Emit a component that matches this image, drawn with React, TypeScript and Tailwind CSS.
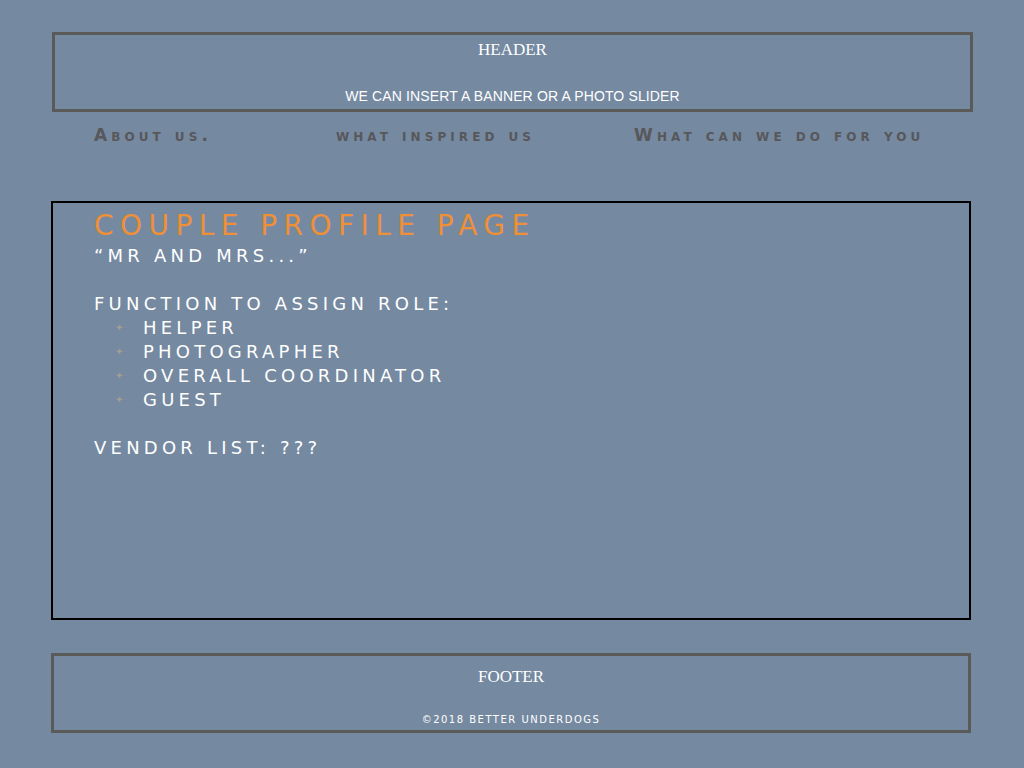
const roles = ["HELPER", "PHOTOGRAPHER", "OVERALL COORDINATOR", "GUEST"];

const wide = { fontFamily: '"DejaVu Sans", "Liberation Sans", sans-serif' };

export default function App() {
  return (
    <div className="min-h-[768px] w-full bg-[#7589a1] pt-[32px]">
      {/* header */}
      <header className="ml-[52px] flex h-[80px] w-[921px] flex-col items-center border-[3px] border-[#5a5a58] text-white">
        <p className="mt-[3px] text-[17px] leading-[24px]" style={{ fontFamily: '"Liberation Serif", serif' }}>
          HEADER
        </p>
        <p className="mt-auto mb-[3px] text-[14px] leading-[20px] tracking-[0.01em]" style={{ fontFamily: '"Liberation Sans", sans-serif' }}>
          WE CAN INSERT A BANNER OR A PHOTO SLIDER
        </p>
      </header>

      {/* nav */}
      <nav className="ml-[94px] mt-[12px] flex h-[24px] items-center text-[17px] font-bold text-[#58575a] [font-variant:small-caps] tracking-[0.24em]" style={wide}>
        <a>About us.</a>
        <a className="ml-[124px]">what inspired us</a>
        <a className="ml-[99px]">What can we do for you</a>
      </nav>

      {/* content */}
      <main className="ml-[51px] mt-[53px] h-[419px] w-[920px] border-2 border-black px-[41px] pt-[4px] text-white" style={wide}>
        <h1 className="text-[28px] leading-[37px] tracking-[0.23em] text-[#ef8f36]">COUPLE PROFILE PAGE</h1>
        <p className="text-[18px] leading-[24px] tracking-[0.235em]">“MR AND MRS...”</p>
        <p className="mt-[24px] text-[18px] leading-[24px] tracking-[0.235em]">FUNCTION TO ASSIGN ROLE:</p>
        <ul className="text-[18px] leading-[24px] tracking-[0.235em]">
          {roles.map((r) => (
            <li key={r} className="flex items-center">
              <span className="ml-[21px] w-[28px] text-[10px] tracking-normal text-[#a39e92]">✦</span>
              <span>{r}</span>
            </li>
          ))}
        </ul>
        <p className="mt-[24px] text-[18px] leading-[24px] tracking-[0.235em]">VENDOR LIST: ???</p>
      </main>

      {/* footer */}
      <footer className="ml-[51px] mt-[33px] flex h-[80px] w-[920px] flex-col items-center border-[3px] border-[#5a5a58] text-white">
        <p className="mt-[9px] text-[17px] leading-[24px]" style={{ fontFamily: '"Liberation Serif", serif' }}>
          FOOTER
        </p>
        <p className="mt-auto mb-[3px] text-[10px] leading-[14px] tracking-[0.15em]" style={wide}>
          ©2018 BETTER UNDERDOGS
        </p>
      </footer>
    </div>
  );
}
